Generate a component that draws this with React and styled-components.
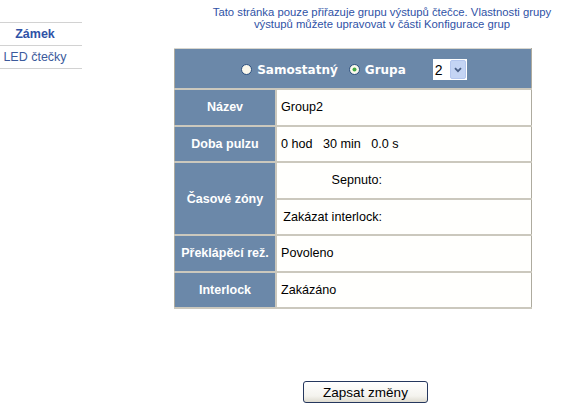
import React from 'react'
import styled, { createGlobalStyle } from 'styled-components'

const colors = {
  link: '#2f52a6',
  head: '#6b88a9',
  cell: '#fffffd',
  line: '#cbc8bd',
  frame: '#aeab9f',
}

const GlobalStyle = createGlobalStyle`
  html, body {
    margin: 0;
    padding: 0;
    background: #fff;
    font-family: 'Liberation Sans', Arial, sans-serif;
  }
`

const Page = styled.div`
  display: flex;
  align-items: flex-start;
  width: 580px;
  height: 407px;
`

const Nav = styled.ul`
  list-style: none;
  margin: 22px 0 0;
  padding: 0;
  width: 82px;
  border-top: 1px solid #d2d2d2;
`

const NavItem = styled.li`
  height: 22px;
  line-height: 23px;
  padding-right: 12px;
  text-align: center;
  font-size: 12.5px;
  font-weight: ${p => (p.active ? 'bold' : 'normal')};
  color: ${p => (p.active ? colors.link : '#3c5a9c')};
  border-bottom: 1px solid #d2d2d2;
`

const Main = styled.div`
  display: flex;
  flex-direction: column;
  padding-left: 92px;
`

const Intro = styled.p`
  margin: 6px 0 0 24px;
  width: 368px;
  text-align: center;
  font-size: 11.3px;
  line-height: 12px;
  color: ${colors.link};
`

const Table = styled.table`
  margin-top: 18px;
  width: 358px;
  border-collapse: collapse;
  border: 1px solid ${colors.frame};
  border-top-color: #d8d6ce;
`

const HeadCell = styled.td`
  height: 39px;
  padding: 0;
  background: ${colors.head};
  border-bottom: 2px solid ${colors.line};
`

const Label = styled.td`
  width: 100px;
  height: 34.5px;
  padding: 0;
  background: ${colors.head};
  color: #fff;
  font-size: 12.5px;
  font-weight: bold;
  text-align: center;
  border-bottom: 2px solid ${colors.line};
  border-right: 2px solid ${colors.line};
`

const Value = styled.td`
  height: 34.5px;
  padding: 0 0 0 4px;
  background: ${colors.cell};
  color: #000;
  font-size: 12.6px;
  border-bottom: 2px solid ${colors.line};
  white-space: pre;
`

const Sub = styled.span`
  display: inline-block;
  width: 101px;
  text-align: right;
`

const ModeBar = styled.div`
  display: flex;
  align-items: center;
  justify-content: center;
  padding: 2px 0 0 2px;
`

const Choice = styled.label`
  display: flex;
  align-items: center;
  gap: 5px;
  margin-right: ${p => p.$gap}px;
  font-family: 'DejaVu Sans', Verdana, sans-serif;
  font-size: 12px;
  font-weight: bold;
  color: #fff;
`

const Select = styled.div`
  display: flex;
  align-items: center;
  justify-content: space-between;
  width: 34px;
  height: 21px;
  padding-left: 2px;
  box-sizing: border-box;
  background: #fff;
  font-size: 14px;
  color: #000;
`

const Arrow = styled.span`
  display: flex;
  align-items: center;
  justify-content: center;
  width: 16px;
  height: 19px;
  margin-right: 1px;
  background: #c4d4f4;
  border: 1px solid #b4c6ee;
  box-sizing: border-box;
  border-radius: 2px;
`

const Footer = styled.div`
  margin: 72px 0 0 129px;
`

const Button = styled.button`
  width: 125px;
  height: 22px;
  padding: 0;
  font-family: 'Liberation Sans', Arial, sans-serif;
  font-size: 13.5px;
  color: #000;
  border: 1px solid #25375e;
  border-radius: 3px;
  background: linear-gradient(#ffffff, #f4f3ee 70%, #dedbd0);
`

const Radio = ({ on }) => (
  <svg width="11" height="11" viewBox="0 0 11 11">
    <circle cx="5.5" cy="5.5" r="5" fill="#fbf8ec" stroke="#2a4e7e" strokeWidth="1" />
    {on && <circle cx="5.5" cy="5.5" r="2" fill="#43a843" />}
  </svg>
)

const Chevron = () => (
  <svg width="8" height="6" viewBox="0 0 8 6">
    <path d="M1 1.2 L4 4.2 L7 1.2" fill="none" stroke="#4a5f86" strokeWidth="1.8" />
  </svg>
)

const rows = [
  ['Název', 'Group2'],
  ['Doba pulzu', '0 hod   30 min   0.0 s'],
]

const tail = [
  ['Překlápěcí rež.', 'Povoleno'],
  ['Interlock', 'Zakázáno'],
]

export default function App() {
  return (
    <Page>
      <GlobalStyle />
      <Nav>
        <NavItem active>Zámek</NavItem>
        <NavItem>LED čtečky</NavItem>
      </Nav>
      <Main>
        <Intro>
          Tato stránka pouze přiřazuje grupu výstupů čtečce. Vlastnosti grupy
          výstupů můžete upravovat v části Konfigurace grup
        </Intro>
        <Table>
          <tbody>
            <tr>
              <HeadCell colSpan={2}>
                <ModeBar>
                  <Choice $gap={11}><Radio />Samostatný</Choice>
                  <Choice $gap={27}><Radio on />Grupa</Choice>
                  <Select>2<Arrow><Chevron /></Arrow></Select>
                </ModeBar>
              </HeadCell>
            </tr>
            {rows.map(([k, v]) => (
              <tr key={k}>
                <Label>{k}</Label>
                <Value>{v}</Value>
              </tr>
            ))}
            <tr>
              <Label rowSpan={2}>Časové zóny</Label>
              <Value><Sub>Sepnuto:</Sub></Value>
            </tr>
            <tr>
              <Value><Sub>Zakázat interlock:</Sub></Value>
            </tr>
            {tail.map(([k, v]) => (
              <tr key={k}>
                <Label>{k}</Label>
                <Value>{v}</Value>
              </tr>
            ))}
          </tbody>
        </Table>
        <Footer>
          <Button>Zapsat změny</Button>
        </Footer>
      </Main>
    </Page>
  )
}
